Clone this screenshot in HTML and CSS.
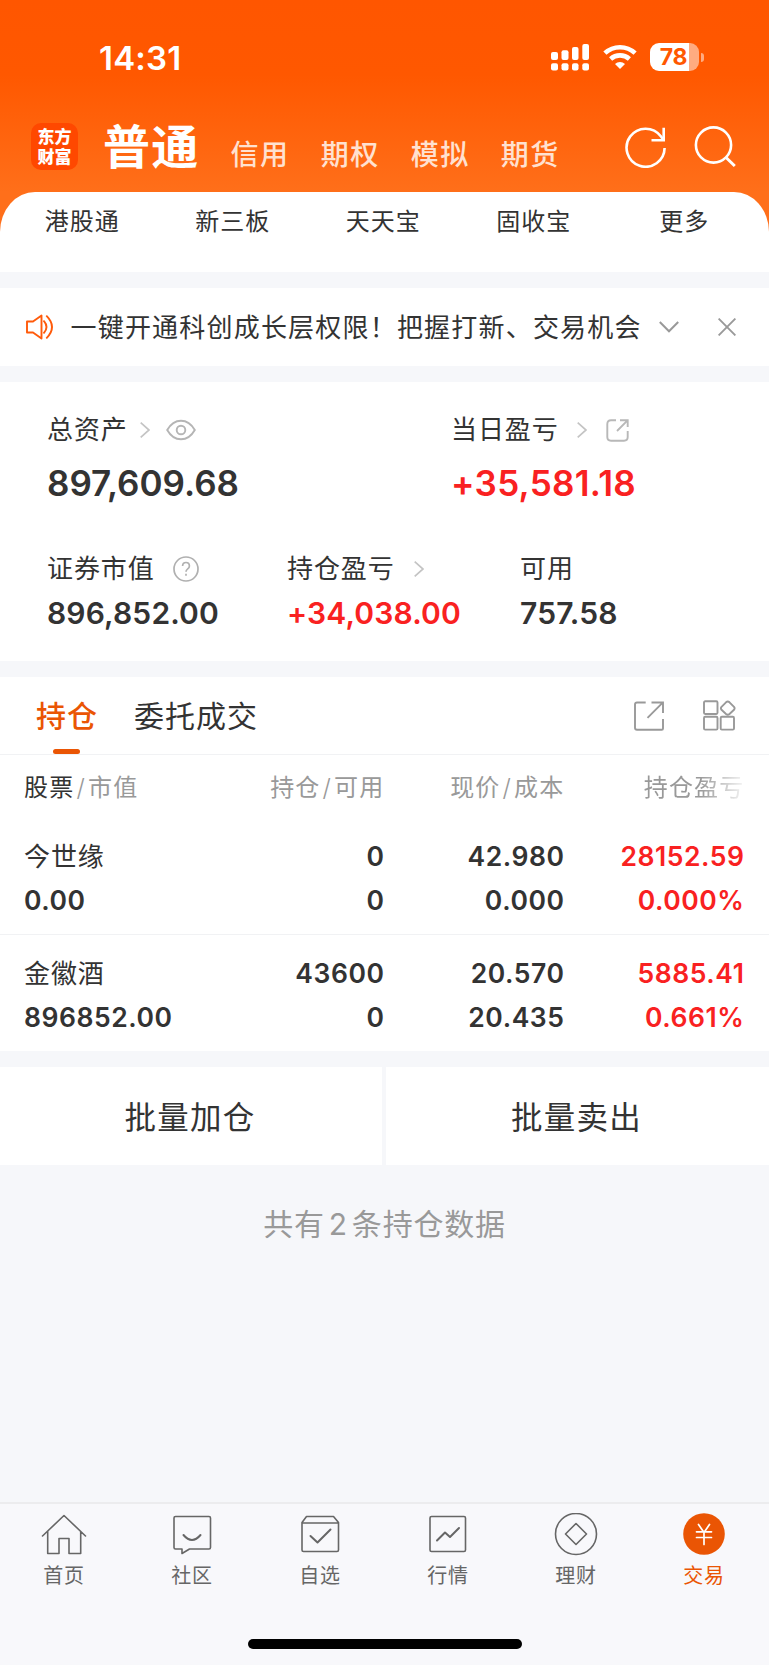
FILE: index.html
```html
<!DOCTYPE html>
<html lang="zh-CN">
<head>
<meta charset="utf-8">
<title>东方财富 - 交易</title>
<link rel="stylesheet" href="styles.css">
</head>
<body>
<div class="app">
  <header class="hero">
    <div class="status">
      <span class="clock">14:31</span>
      <div class="status-icons">
        <svg class="signal" width="38" height="28" viewBox="0 0 38 28" fill="#fff">
          <rect x="0" y="8" width="7" height="8" rx="2"/><rect x="10.5" y="6.300" width="7" height="9.700" rx="2"/><rect x="21" y="3" width="6.500" height="13" rx="2"/><rect x="31.300" y="0" width="6.700" height="16" rx="2"/>
          <rect x="0" y="19.300" width="7" height="7.200" rx="2"/><rect x="10.500" y="19.300" width="7" height="7.200" rx="2"/><rect x="21" y="19.300" width="6.500" height="7.200" rx="2"/><rect x="31.300" y="19.300" width="6.700" height="7.200" rx="2"/>
        </svg>
        <svg class="wifi" width="34" height="26" viewBox="0 0 34 26" fill="none" stroke="#fff" stroke-width="4.600">
          <path d="M1.900 9.200a22 22 0 0 1 30.200 0M7.600 15a14 14 0 0 1 18.800 0"/>
          <path d="M17 25l-5-5a7.200 7.200 0 0 1 10 0z" fill="#fff" stroke="none"/>
        </svg>
        <div class="battery"><span class="battery-body">78</span><span class="battery-cap"></span></div>
      </div>
    </div>
    <div class="titlebar">
      <div class="logo"><span>东方</span><span>财富</span></div>
      <h1 class="account">普通</h1>
      <nav class="accounts"><a>信用</a><a>期权</a><a>模拟</a><a>期货</a></nav>
      <svg class="refresh" width="42" height="42" viewBox="0 0 42 42" fill="none" stroke="#fff" stroke-width="2.600">
        <path d="M39.600 22A19 19 0 1 1 35.800 10.300L38.500 14"/><path d="M26.500 14.200H38.700V1.800"/>
      </svg>
      <svg class="search" width="42" height="42" viewBox="0 0 42 42" fill="none" stroke="#fff" stroke-width="2.600">
        <circle cx="19.500" cy="19" r="17.600"/><path d="M31.500 31l9.300 9" stroke-width="3"/>
      </svg>
    </div>
    <nav class="quick"><a>港股通</a><a>新三板</a><a>天天宝</a><a>固收宝</a><a>更多</a></nav>
  </header>

  <section class="notice">
    <svg class="speaker" width="28" height="26" viewBox="0 0 28 26" fill="none" stroke="#ff5a0a" stroke-width="1.900" stroke-linejoin="round" stroke-linecap="round">
      <path d="M1 7.500H7L15.500 1.500V24.500L7 18.500H1z"/><path d="M18 7.200q5 5.800 0 11.600M20.800 2.200q10.400 10.800 0 21.600"/>
    </svg>
    <p class="notice-text">一键开通科创成长层权限！把握打新、交易机会</p>
    <svg class="chev" width="20" height="12" viewBox="0 0 20 12" fill="none" stroke="#999" stroke-width="2"><path d="M.8 1L10 10.300 19.200 1"/></svg>
    <svg class="close" width="18" height="18" viewBox="0 0 18 18" fill="none" stroke="#999" stroke-width="1.900"><path d="M.6.600L17.400 17.400M17.400.600L.600 17.400"/></svg>
  </section>

  <section class="assets">
    <div class="primary">
      <div>
        <div class="label">总资产
          <svg class="arrow" width="10" height="16" viewBox="0 0 10 16"><path d="M.7.700L9 8 .7 15.300"/></svg>
          <svg class="eye" width="30" height="22" viewBox="0 0 30 22" fill="none" stroke="#b5b5b5" stroke-width="1.900"><path d="M1.200 11Q6.500 1.700 15 1.700T28.800 11Q23.500 20.300 15 20.300T1.200 11z"/><circle cx="15" cy="11" r="4.300"/></svg>
        </div>
        <div class="value">897,609.68</div>
      </div>
      <div>
        <div class="label">当日盈亏
          <svg class="arrow" width="10" height="16" viewBox="0 0 10 16"><path d="M.7.700L9 8 .7 15.300"/></svg>
          <svg class="share" width="23" height="23" viewBox="0 0 23 23" fill="none" stroke="#b8b8b8" stroke-width="1.900"><path d="M10 1.300H5q-3.700 0-3.700 3.700v13q0 3.700 3.700 3.700h13q3.700 0 3.700-3.700v-6"/><path d="M14 1.300h7.700V8M11 12L21.300 1.700"/></svg>
        </div>
        <div class="value up">+35,581.18</div>
      </div>
    </div>
    <div class="secondary">
      <div>
        <div class="label">证券市值
          <svg class="help" width="26" height="26" viewBox="0 0 26 26" fill="none" stroke="#b0b0b0" stroke-width="1.700"><circle cx="13" cy="13" r="12"/><path d="M9.600 10q0-3.500 3.400-3.500T16.400 10q0 1.700-1.700 2.900T13 15.800"/><path d="M13 17.800v2"/></svg>
        </div>
        <div class="value">896,852.00</div>
      </div>
      <div>
        <div class="label">持仓盈亏
          <svg class="arrow" width="10" height="16" viewBox="0 0 10 16"><path d="M.7.700L9 8 .7 15.300"/></svg>
        </div>
        <div class="value up">+34,038.00</div>
      </div>
      <div>
        <div class="label">可用</div>
        <div class="value">757.58</div>
      </div>
    </div>
  </section>

  <section class="positions">
    <div class="tabs">
      <a class="tab active">持仓</a>
      <a class="tab">委托成交</a>
      <svg class="export" width="30" height="30" viewBox="0 0 30 30" fill="none" stroke="#999" stroke-width="1.900"><path d="M11.700 1.500H3q-2 0-2 2v23.200q0 2 2 2h24.700q1.300 0 1.300-1.300V18"/><path d="M17.500 1.500H29V12M13.500 16.800L28.700 1.700"/></svg>
      <svg class="grid-icon" width="33" height="31" viewBox="0 0 33 31" fill="none" stroke="#999" stroke-width="1.900" stroke-linejoin="round"><rect x="1" y="1.200" width="13.500" height="12.800" rx="1.200"/><rect x="1" y="16.800" width="13.500" height="12.800" rx="1.200"/><rect x="17.700" y="16.800" width="13.300" height="12.800" rx="1.200"/><path d="M23 2.300q1.800-1.600 3.500 0L31 6.800q1.200 1.500 0 3L26.500 14q-1.700 1.500-3.500 0L18.500 9.800q-1.200-1.500 0-3z"/></svg>
    </div>
    <div class="row head">
      <span><b>股票</b><i>/</i>市值</span><span>持仓<i>/</i>可用</span><span>现价<i>/</i>成本</span><span class="fade">持仓盈亏</span>
    </div>
    <div class="row">
      <span class="name">今世缘</span><span>0</span><span>42.980</span><span class="up">28152.59</span>
      <span>0.00</span><span>0</span><span>0.000</span><span class="up">0.000%</span>
    </div>
    <div class="row last">
      <span class="name">金徽酒</span><span>43600</span><span>20.570</span><span class="up">5885.41</span>
      <span>896852.00</span><span>0</span><span>20.435</span><span class="up">0.661%</span>
    </div>
  </section>

  <div class="batch"><button>批量加仓</button><button>批量卖出</button></div>
  <p class="count">共有<span>2</span>条持仓数据</p>

  <footer class="bottom">
    <nav class="tabbar">
      <a><svg width="46" height="44" viewBox="0 0 46 44"><path d="M1.500 23L23 2.500 44.500 23M6.700 18.500V40.500H18V25.500H28V40.500H39.700V18.500"/></svg>首页</a>
      <a><svg width="46" height="44" viewBox="0 0 46 44"><path d="M6.500 3.500H40q1.500 0 1.500 1.500V34.500q0 1.500-1.500 1.500H20.500L13 40.500V36H6.500Q5 36 5 34.500V5q0-1.500 1.500-1.500z"/><path d="M14.500 22q8.500 10 17 0" stroke-width="2"/></svg>社区</a>
      <a><svg width="46" height="44" viewBox="0 0 46 44"><path d="M9.500 3.500H36.500L41.500 9.500V37q0 1.500-1.500 1.500H6.500Q5 38.500 5 37V9.500zM5 10H41.500"/><path d="M13.500 23l7 6.500L33.500 16.500" stroke-width="2"/></svg>自选</a>
      <a><svg width="46" height="44" viewBox="0 0 46 44"><rect x="5" y="3.500" width="35.500" height="35" rx="1.500"/><path d="M12 27.500L20 19.500 25 24 34 15" stroke-width="2"/></svg>行情</a>
      <a><svg width="46" height="44" viewBox="0 0 46 44"><circle cx="23" cy="21" r="20.500"/><path d="M23 10.500L33.500 21 23 31.500 12.500 21z"/></svg>理财</a>
      <a class="on"><svg width="46" height="44" viewBox="0 0 46 44"><circle cx="23" cy="21" r="20.800" fill="#ea5504" stroke="none"/><path d="M17.500 11.500L23 19.500 28.500 11.500M15.500 18.800H30.500M15.500 24.500H30.500M23 19.500V31.500" stroke="#fff" stroke-width="1.700"/></svg>交易</a>
    </nav>
    <div class="home-bar"></div>
  </footer>
</div>
</body>
</html>
```
FILE: styles.css
```css
* { box-sizing: border-box; }
body { margin: 0; background: #f6f7f9; color: #333; font-family: Inter, "Noto Sans CJK SC", sans-serif; font-weight: 400; }
p, h1 { margin: 0; }
svg { display: block; flex: none; }
.app { width: 769px; height: 1665px; display: flex; flex-direction: column; overflow: hidden; background: #f6f7fa; }
.up { color: #f92121; }

/* header */
.hero { height: 272px; background: linear-gradient(#ff5600 0, #ff5800 75px, #ff6f1a 192px, #ff6f1a 240px); }
.status { height: 115px; display: flex; justify-content: space-between; padding: 43px 65px 0 99px; color: #fff; }
.clock { font-size: 33px; line-height: 30px; font-weight: 600; letter-spacing: .2px; }
.status-icons { display: flex; align-items: flex-start; }
.signal { margin: 1px 14px 0 0; }
.wifi { margin: 1px 13px 0 0; }
.battery { display: flex; align-items: center; height: 28px; }
.battery-body { width: 49px; height: 28px; border-radius: 9px; background: linear-gradient(90deg, #fff 39px, #ffab80 39px); color: #ff5800; font-size: 23px; line-height: 28px; font-weight: 700; text-align: center; letter-spacing: -.3px; padding-right: 2px; }
.battery-cap { width: 3px; height: 9px; margin-left: 2px; border-radius: 0 4px 4px 0; background: #ffab80; }
.titlebar { height: 77px; display: flex; align-items: flex-start; padding-left: 31px; color: #fff; }
.logo { width: 47px; height: 47px; margin-top: 8px; padding-top: 5px; border-radius: 10px; background: #ff4800; display: flex; flex-direction: column; align-items: center; font-size: 17px; line-height: 19.500px; font-weight: 900; }
.account { margin: 5px 0 0 25px; font-size: 47px; line-height: 53px; font-weight: 700; letter-spacing: 1.300px; }
.accounts { display: flex; gap: 31px; margin: 21px 0 0 31px; font-size: 28px; line-height: 38px; font-weight: 500; letter-spacing: 1.500px; color: #ffe1d0; }
.refresh { margin: 11px 0 0 auto; }
.search { margin: 10.500px 33px 0 27px; }
.quick { height: 80px; display: grid; grid-template-columns: repeat(5, 150.500px); padding: 15px 0 0 7px; border-radius: 35px 35px 0 0 / 40px 40px 0 0; background: #fff; font-size: 24px; line-height: 30px; letter-spacing: 1px; text-align: center; }

/* notice */
.notice { height: 78px; margin-top: 16px; background: #fff; display: flex; align-items: center; padding-left: 25.500px; }
.notice-text { width: 572px; margin-left: 17px; padding-top: 2px; font-size: 26px; line-height: 36px; letter-spacing: 1.200px; white-space: nowrap; }
.chev { margin-left: 16px; }
.close { margin-left: 39px; }

/* assets */
.assets { height: 279px; margin-top: 16px; padding: 30px 0 0 47px; background: #fff; }
.label { display: flex; align-items: center; font-size: 26px; line-height: 36px; letter-spacing: .900px; }
.arrow { fill: none; stroke: #c4c4c4; stroke-width: 1.700; margin-left: 12px; }
.value { font-weight: 600; }
.primary { display: grid; grid-template-columns: 404px 1fr; }
.primary .value { margin-top: 13px; font-size: 35px; line-height: 44px; letter-spacing: 0; }
.primary .value.up { letter-spacing: .3px; }
.primary > div:last-child .arrow { margin-left: 18px; }
.eye { margin-left: 16px; }
.share { margin-left: 19px; }
.secondary { display: grid; grid-template-columns: 240px 233px 1fr; margin-top: 46px; }
.secondary .value { margin-top: 6px; font-size: 30px; line-height: 40px; letter-spacing: .15px; }
.secondary .arrow { margin-left: 19px; }
.help { margin-left: 18px; }

/* positions */
.positions { height: 374px; margin-top: 16px; background: #fff; }
.tabs { height: 78px; display: flex; align-items: center; padding-left: 36px; border-bottom: 1px solid #f1f2f4; }
.tab { height: 77px; font-size: 30px; line-height: 78px; letter-spacing: 1px; }
.tab + .tab { margin-left: 36px; }
.tab.active { color: #ea5504; font-weight: 500; display: flex; flex-direction: column; }
.tab.active::after { content: ""; width: 27px; height: 5px; margin: -6px 0 0 17px; border-radius: 2.500px; background: #ea5504; flex: none; }
.export { margin-left: auto; }
.grid-icon { margin: 0 33px 0 39px; }
.row { height: 117px; padding: 16px 25px 0 24px; display: grid; grid-template-columns: 200px 160.500px 180px 180px; grid-auto-rows: 44px; align-items: center; text-align: right; font-size: 26.500px; line-height: 44px; font-weight: 600; letter-spacing: .55px; border-bottom: 1px solid #f1f2f4; }
.row > :nth-child(4n+1) { text-align: left; }
.row .name { padding-top: 1px; font-size: 26px; font-weight: 400; letter-spacing: .900px; }
.row.last { border-bottom: 0; height: 116px; }
.row.head { height: 63px; padding-top: 11px; font-size: 24px; font-weight: 400; letter-spacing: 1.200px; color: #999; border-bottom: 0; }
.head b { font-weight: 400; color: #333; }
.head i { font-style: normal; font-weight: 300; margin: 0 2px; }
.fade { -webkit-mask-image: linear-gradient(90deg, #000 135px, transparent 184px); mask-image: linear-gradient(90deg, #000 135px, transparent 184px); }

/* actions */
.batch { display: grid; grid-template-columns: 382px 383px; gap: 4px; height: 98px; margin-top: 16px; }
.batch button { border: 0; padding: 3px 2px 0 0; background: #fff; color: #333; font: inherit; font-size: 31.500px; letter-spacing: 1.300px; line-height: 40px; }
.count { margin-top: 39px; text-align: center; font-size: 30px; line-height: 40px; letter-spacing: .800px; color: #999; }
.count span { margin: 0 4px; }

/* bottom navigation */
.bottom { height: 163px; margin-top: auto; border-top: 2px solid #ececee; background: #f8f8fb; }
.tabbar { display: grid; grid-template-columns: repeat(6, 128px); padding-top: 9px; }
.tabbar a { display: flex; flex-direction: column; align-items: center; font-size: 20px; line-height: 30px; letter-spacing: .800px; color: #666; }
.tabbar svg { margin-bottom: 4px; fill: none; stroke: #666; stroke-width: 1.600; stroke-linejoin: round; stroke-linecap: round; }
.tabbar .on { color: #ea5504; }
.home-bar { width: 274px; height: 10px; margin: 48px auto 0; border-radius: 5px; background: #000; }
```
